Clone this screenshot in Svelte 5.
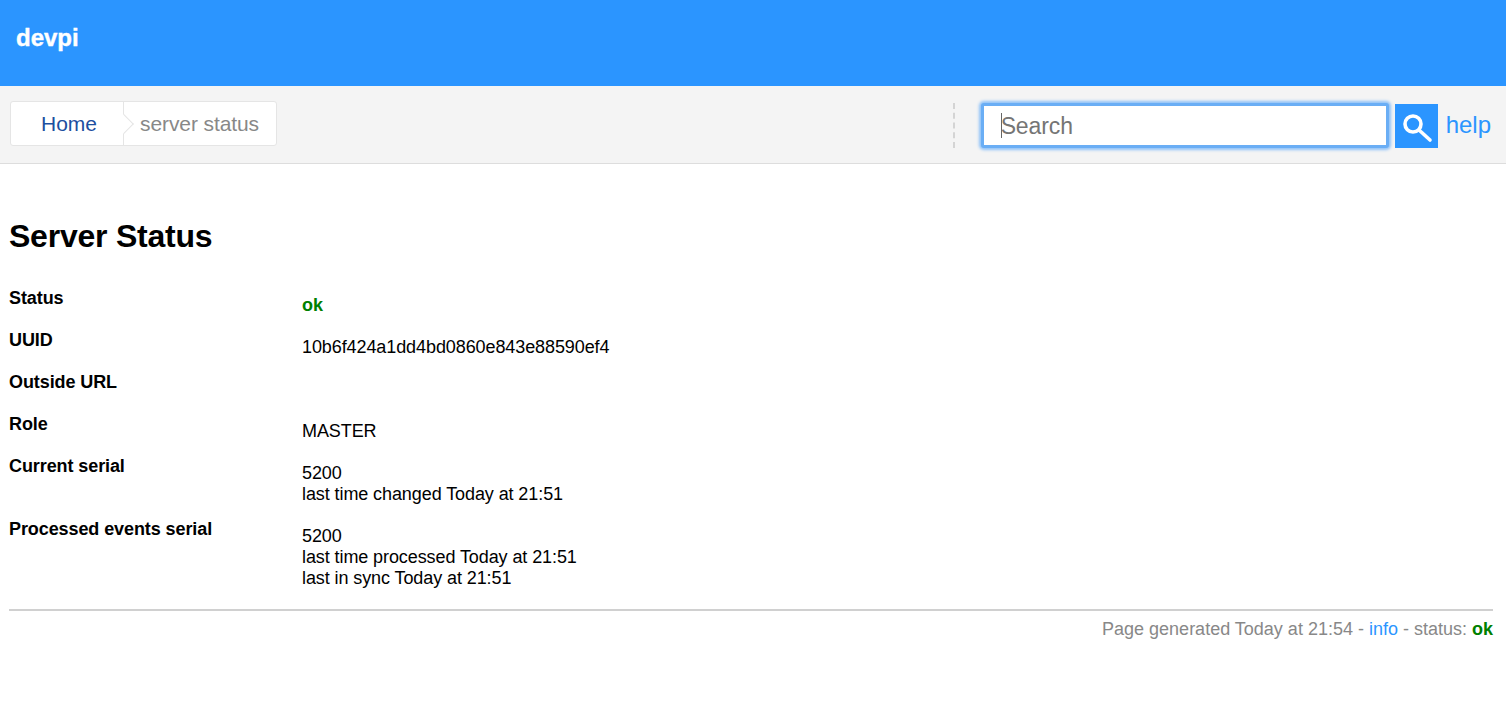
<script>
    const rows = [
        {label: 'Status', lines: ['ok'], ok: true},
        {label: 'UUID', lines: ['10b6f424a1dd4bd0860e843e88590ef4']},
        {label: 'Outside URL', lines: []},
        {label: 'Role', lines: ['MASTER']},
        {label: 'Current serial', lines: ['5200', 'last time changed Today at 21:51']},
        {label: 'Processed events serial', lines: ['5200', 'last time processed Today at 21:51', 'last in sync Today at 21:51']}
    ];
</script>

<header class="top">
    <a class="logo" href="#home">devpi</a>
</header>

<nav class="navigation">
    <div class="path">
        <a class="crumb home" href="#home">Home</a>
        <span class="sep"></span>
        <span class="crumb current">server status</span>
    </div>
    <form class="search" onsubmit={(e) => e.preventDefault()}>
        <div class="field">
            <input type="text" placeholder="Search" />
            <span class="caret"></span>
        </div>
        <button type="submit" aria-label="Search">
            <svg width="43" height="44" viewBox="0 0 43 44">
                <circle cx="18" cy="20" r="8" fill="none" stroke="#fff" stroke-width="3.6" />
                <path d="M24 26 L35 36" stroke="#fff" stroke-width="3.6" stroke-linecap="round" />
            </svg>
        </button>
        <a class="help" href="#help">help</a>
    </form>
</nav>

<main>
    <h1>Server Status</h1>
    <dl>
        {#each rows as row}
            <div class="row">
                <dt>{row.label}</dt>
                <dd class:ok={row.ok}>
                    {#each row.lines as line}
                        <div>{line}</div>
                    {/each}
                </dd>
            </div>
        {/each}
    </dl>
    <footer>
        Page generated Today at 21:54 - <a href="#info">info</a> - status: <strong>ok</strong>
    </footer>
</main>

<style>
    :global(body) {
        margin: 0;
        background: #fff;
        color: #000;
        font-family: "Liberation Sans", Arial, sans-serif;
        font-size: 16px;
    }

    a {
        text-decoration: none;
        color: #2b95ff;
    }

    .top {
        height: 86px;
        background: #2b95ff;
        box-sizing: border-box;
        padding: 24px 16px 0;
    }

    .logo {
        color: #fff;
        font-size: 24px;
        font-weight: bold;
        line-height: 28px;
        -webkit-text-stroke: 0.4px #fff;
    }

    .navigation {
        height: 78px;
        box-sizing: border-box;
        background: #f4f4f4;
        border-bottom: 1px solid #ddd;
        display: flex;
        justify-content: space-between;
        align-items: flex-start;
        padding: 15px 15px 0 10px;
    }

    .path {
        display: flex;
        height: 45px;
        box-sizing: border-box;
        background: #fff;
        border: 1px solid #e5e5e5;
        border-radius: 3px;
        font-size: 21px;
        line-height: 44px;
    }

    .crumb {
        display: block;
    }

    .home {
        color: #1d4f9f;
        padding: 0 26px 0 30px;
    }

    .current {
        color: #888;
        padding: 0 17px 0 16px;
        letter-spacing: -0.1px;
    }

    .sep {
        position: relative;
        width: 0;
        border-left: 1px solid #e5e5e5;
    }

    .sep::after {
        content: "";
        position: absolute;
        top: 15px;
        left: -7px;
        width: 13px;
        height: 13px;
        background: #fff;
        border-top: 1px solid #e5e5e5;
        border-right: 1px solid #e5e5e5;
        transform: rotate(45deg);
    }

    .search {
        display: flex;
        align-items: flex-start;
        margin-top: 2px;
        padding-left: 26px;
        border-left: 2px dashed #d4d4d4;
    }

    .field {
        position: relative;
    }

    input {
        display: block;
        width: 408px;
        height: 45px;
        box-sizing: border-box;
        background: #fff;
        border: 3px solid #6aaef5;
        border-radius: 3px;
        box-shadow: 0 0 3px 2px #8fc2f8;
        outline: none;
        font-family: inherit;
        font-size: 23px;
        letter-spacing: -0.1px;
        color: #757575;
        padding: 2px 0 0 17px;
    }

    input::placeholder {
        color: #757575;
        opacity: 1;
    }

    .caret {
        position: absolute;
        left: 20px;
        top: 10px;
        width: 1px;
        height: 25px;
        background: #666;
    }

    button {
        width: 43px;
        height: 44px;
        border: 0;
        padding: 0;
        margin: 1px 0 0 6px;
        background: #2b95ff;
    }

    button svg {
        display: block;
    }

    .help {
        font-size: 24px;
        line-height: 44px;
        margin-left: 8px;
    }

    main {
        padding: 0 13px 0 9px;
    }

    h1 {
        margin: 54px 0 0;
        font-size: 32px;
        line-height: 37px;
        letter-spacing: -0.23px;
    }

    dl {
        margin: 33px 0 0;
    }

    .row {
        display: flex;
        padding-bottom: 14px;
        font-size: 18px;
        line-height: 21px;
    }

    dt {
        width: 293px;
        font-weight: bold;
        letter-spacing: -0.09px;
    }

    dd {
        margin: 7px 0 0;
        min-height: 21px;
        letter-spacing: -0.09px;
    }

    dd.ok {
        color: #008000;
        font-weight: bold;
    }

    footer {
        border-top: 2px solid #d0d0d0;
        margin-top: 6px;
        text-align: right;
        color: #888;
        font-size: 18px;
        padding-top: 8px;
    }

    footer strong {
        color: #008000;
    }
</style>
